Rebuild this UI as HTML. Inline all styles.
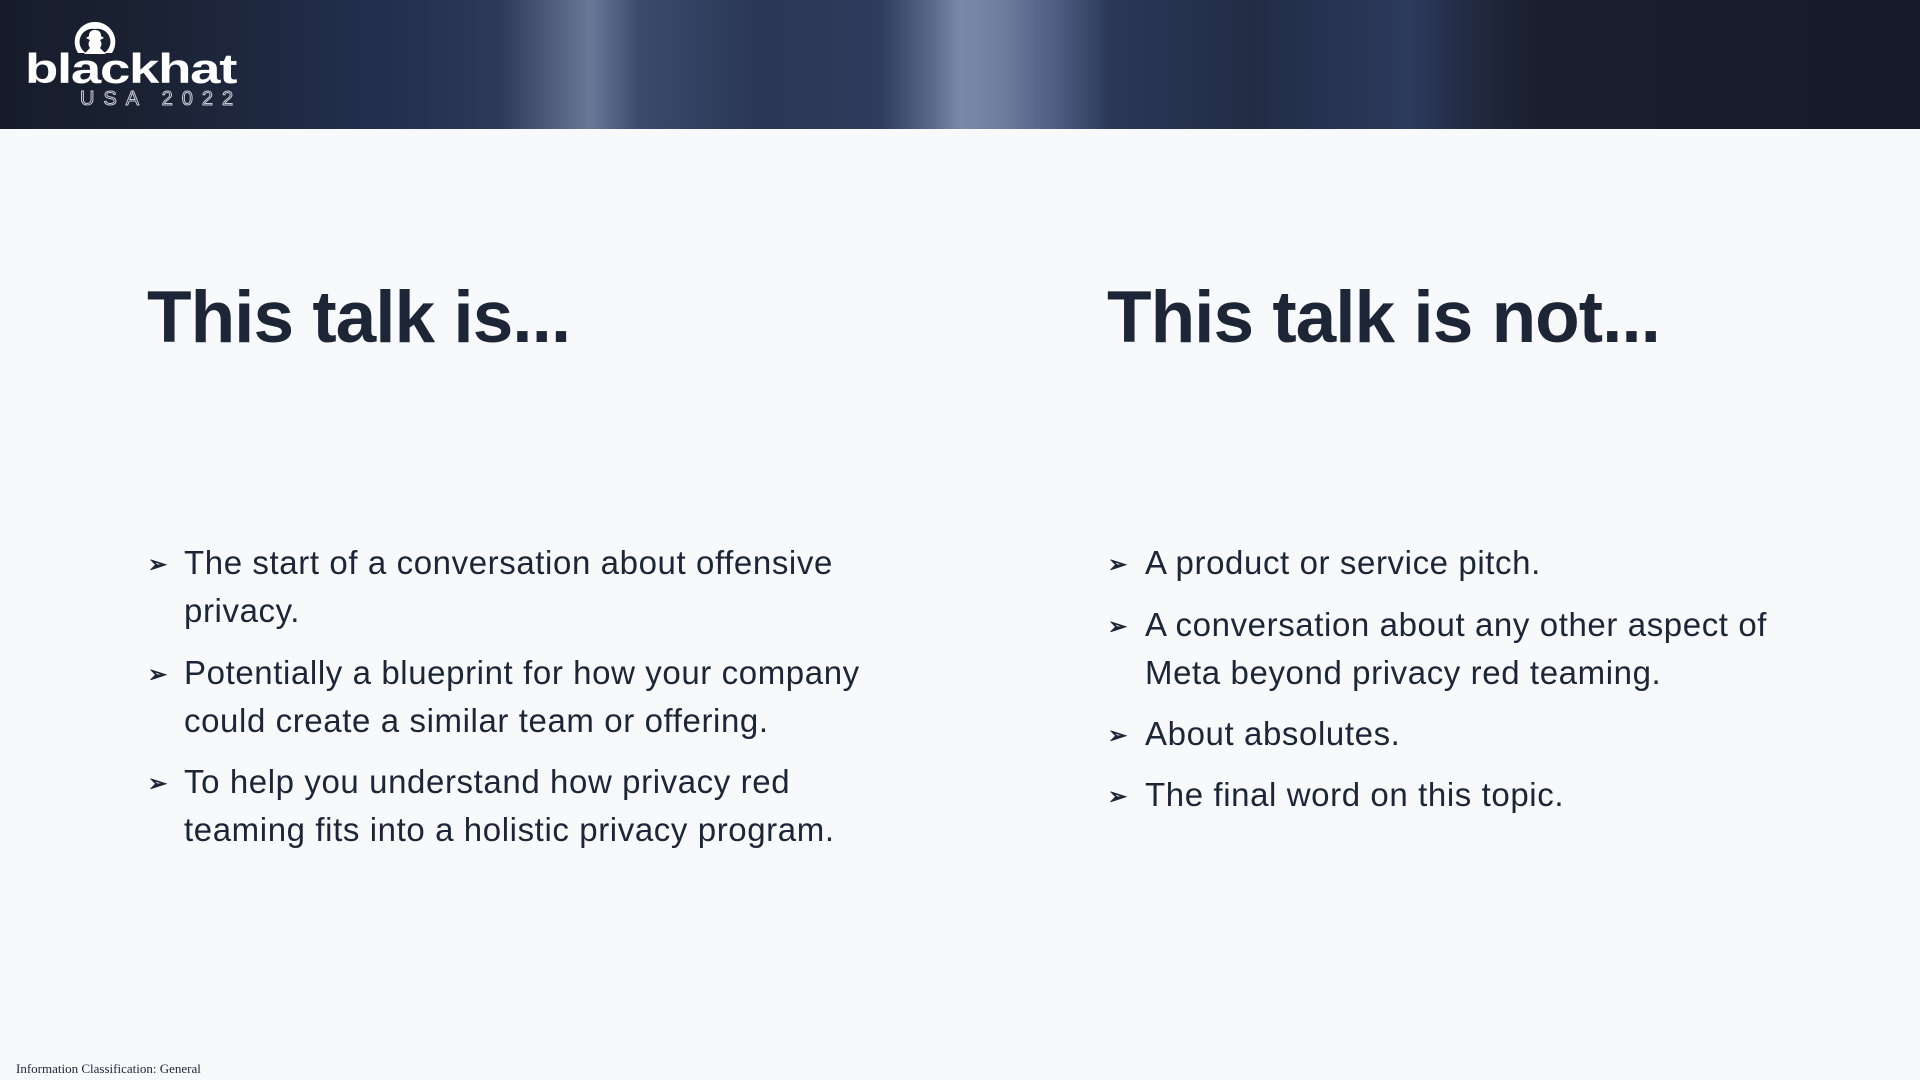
<!DOCTYPE html>
<html><head><meta charset="utf-8"><style>
*{margin:0;padding:0;box-sizing:border-box}
body{width:1920px;height:1080px;background:#f7f9fb;position:relative;overflow:hidden;font-family:"Liberation Sans",sans-serif;color:#1c2637}
.hdr{position:absolute;left:0;top:0;width:1920px;height:129px;background:linear-gradient(90deg,#161c2a 0px,#1a2233 150px,#243050 400px,#2d3a5a 500px,#6a7898 590px,#3a4a6c 640px,#2a3756 760px,#2e3b5c 880px,#56678a 930px,#7a88a8 960px,#6f7ea0 1000px,#4b5b80 1060px,#2b3858 1110px,#222c45 1250px,#2c3a5c 1410px,#232d45 1460px,#181e2c 1540px,#161c2a 1920px)}
.logo{position:absolute;left:25px;top:52px;color:#fff;font-weight:bold;font-size:42px;letter-spacing:-1px;line-height:34px;transform:scaleX(1.3);transform-origin:0 0}
.usa{position:absolute;left:80px;top:89px;color:transparent;-webkit-text-stroke:1px #c8ccd6;font-size:20px;letter-spacing:9px;line-height:20px}
.h{position:absolute;font-weight:bold;font-size:73px;letter-spacing:-1px;line-height:80px;color:#1c2637}
.b{position:absolute;font-size:33px;letter-spacing:0.6px;line-height:48px}
.ar{position:absolute;font-size:23px;font-weight:bold}
.ft{position:absolute;left:16px;top:1061px;font-family:"Liberation Serif",serif;font-size:13px;color:#1c2637}
</style></head><body>
<div class="hdr"></div>
<svg style="position:absolute;left:70px;top:20px" width="50" height="40" viewBox="0 0 50 40">
<path d="M25 2 A20 20 0 0 0 8 33 L16 33 A13 13 0 0 1 25 9 A13 13 0 0 1 34 33 L42 33 A20 20 0 0 0 25 2Z" fill="#fff"/>
<path d="M19 16 Q19 10 25 10 Q31 10 31 16 L34 18 L30 20 Q33 24 30 28 L36 34 L14 34 L20 28 Q17 24 20 20 L16 18Z" fill="#fff"/>
</svg>
<div class="logo">blackhat</div>
<div class="usa">USA 2022</div>
<div class="h" style="left:147px;top:278px">This talk is...</div>
<div class="h" style="left:1107px;top:278px">This talk is not...</div>

<div class="ar" style="left:148px;top:551px">➢</div>
<div class="b" style="left:184px;top:539px">The start of a conversation about offensive<br>privacy.</div>
<div class="ar" style="left:148px;top:661px">➢</div>
<div class="b" style="left:184px;top:649px">Potentially a blueprint for how your company<br>could create a similar team or offering.</div>
<div class="ar" style="left:148px;top:770px">➢</div>
<div class="b" style="left:184px;top:758px">To help you understand how privacy red<br>teaming fits into a holistic privacy program.</div>

<div class="ar" style="left:1108px;top:551px">➢</div>
<div class="b" style="left:1145px;top:539px">A product or service pitch.</div>
<div class="ar" style="left:1108px;top:613px">➢</div>
<div class="b" style="left:1145px;top:601px">A conversation about any other aspect of<br>Meta beyond privacy red teaming.</div>
<div class="ar" style="left:1108px;top:722px">➢</div>
<div class="b" style="left:1145px;top:710px">About absolutes.</div>
<div class="ar" style="left:1108px;top:783px">➢</div>
<div class="b" style="left:1145px;top:771px">The final word on this topic.</div>

<div class="ft">Information Classification: General</div>
</body></html>
